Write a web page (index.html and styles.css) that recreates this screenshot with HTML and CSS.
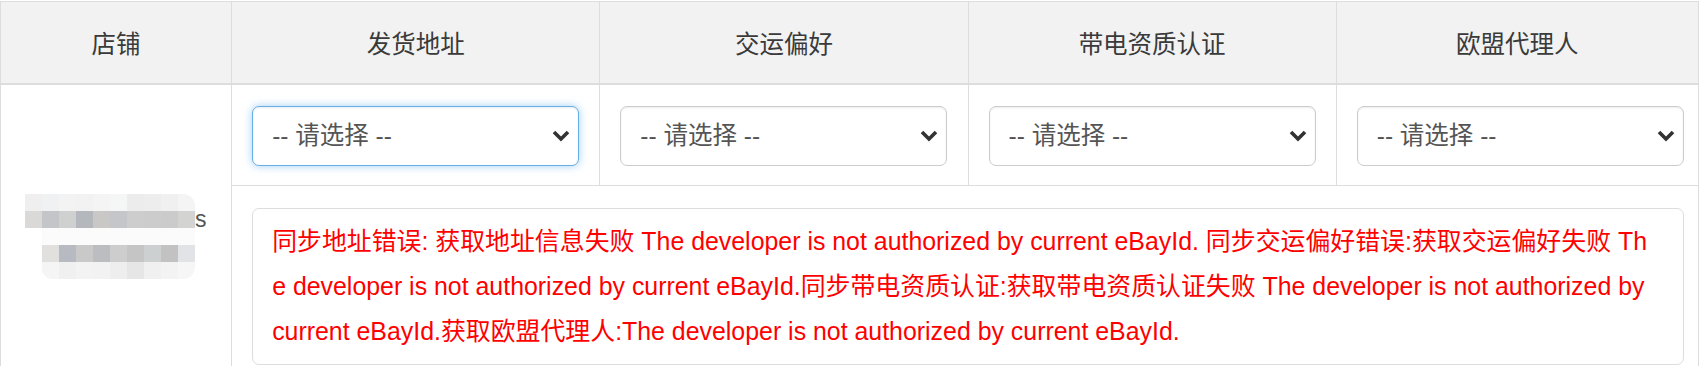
FILE: index.html
```html
<!DOCTYPE html>
<html lang="zh-CN">
<head>
<meta charset="UTF-8">
<meta name="viewport" content="width=device-width, initial-scale=1.0">
<title>店铺设置</title>
<link rel="stylesheet" href="styles.css">
</head>
<body>

<table class="shop-table">
  <colgroup>
    <col class="col-shop">
    <col class="col-opt">
    <col class="col-opt">
    <col class="col-opt">
    <col class="col-last">
  </colgroup>
  <thead>
    <tr>
      <th>店铺</th>
      <th>发货地址</th>
      <th>交运偏好</th>
      <th>带电资质认证</th>
      <th>欧盟代理人</th>
    </tr>
  </thead>
  <tbody>
    <tr class="select-row">
      <td rowspan="2" class="shop-cell">
        <div class="mosaic">
          <div class="mosaic-row">
            <i style="background:#efefef"></i><i style="background:#eff1f3"></i><i style="background:#f3f3f3"></i><i style="background:#f2f2f2"></i><i style="background:#f4f4f4"></i><i style="background:#f5f7f6"></i><i style="background:#ececec"></i><i style="background:#ededed"></i><i style="background:#f0f0f0"></i><i class="round-tr" style="background:#f4f4f4"></i>
          </div>
          <div class="mosaic-row">
            <i style="background:#dbd9d7"></i><i style="background:#c3c5c9"></i><i style="background:#cfd1d0"></i><i style="background:#b4b8bd"></i><i style="background:#c9c8c6"></i><i style="background:#c4c6c9"></i><i style="background:#cecdcd"></i><i style="background:#cdcccc"></i><i style="background:#cbcbcb"></i><i style="background:#d3d3d1"></i><span class="mosaic-tail">s</span>
          </div>
          <div class="mosaic-row mosaic-gap"></div>
          <div class="mosaic-row indent">
            <i style="background:#e1e0df"></i><i style="background:#b8bac2"></i><i style="background:#c9c9c9"></i><i style="background:#bcbdc1"></i><i style="background:#cdcdcd"></i><i style="background:#c5c5c5"></i><i style="background:#cdd0d0"></i><i style="background:#c2c2c2"></i><i style="background:#e1e3e7"></i>
          </div>
          <div class="mosaic-row indent">
            <i class="round-bl" style="background:#f5f5f5"></i><i style="background:#f0f0f0"></i><i style="background:#f3f3f3"></i><i style="background:#f2f2f2"></i><i style="background:#eeeeee"></i><i style="background:#e6e6e6"></i><i style="background:#f0f0f0"></i><i style="background:#f3f3f3"></i><i class="round-br" style="background:#f6f6f6"></i>
          </div>
        </div>
      </td>
      <td>
        <div class="select-wrap">
          <select class="form-select is-focus">
            <option>-- 请选择 --</option>
          </select>
          <svg class="chevron" width="18" height="12" viewBox="0 0 18 12"><polyline points="2,2 9,9 16,2" fill="none" stroke="#333" stroke-width="3.6"/></svg>
        </div>
      </td>
      <td>
        <div class="select-wrap">
          <select class="form-select">
            <option>-- 请选择 --</option>
          </select>
          <svg class="chevron" width="18" height="12" viewBox="0 0 18 12"><polyline points="2,2 9,9 16,2" fill="none" stroke="#333" stroke-width="3.6"/></svg>
        </div>
      </td>
      <td>
        <div class="select-wrap">
          <select class="form-select">
            <option>-- 请选择 --</option>
          </select>
          <svg class="chevron" width="18" height="12" viewBox="0 0 18 12"><polyline points="2,2 9,9 16,2" fill="none" stroke="#333" stroke-width="3.6"/></svg>
        </div>
      </td>
      <td>
        <div class="select-wrap">
          <select class="form-select">
            <option>-- 请选择 --</option>
          </select>
          <svg class="chevron" width="18" height="12" viewBox="0 0 18 12"><polyline points="2,2 9,9 16,2" fill="none" stroke="#333" stroke-width="3.6"/></svg>
        </div>
      </td>
    </tr>
    <tr class="error-row">
      <td colspan="4">
        <div class="sync-error">同步地址错误: 获取地址信息失败 The developer is not authorized by current eBayId. 同步交运偏好错误:获取交运偏好失败 The developer is not authorized by current eBayId.同步带电资质认证:获取带电资质认证失败 The developer is not authorized by current eBayId.获取欧盟代理人:The developer is not authorized by current eBayId.</div>
      </td>
    </tr>
  </tbody>
</table>

</body>
</html>
```

FILE: styles.css
```css
* {
  box-sizing: border-box;
}

body {
  margin: 0;
  background: #fff;
  font-family: "Liberation Sans", "Noto Sans CJK SC", sans-serif;
  color: #333;
}

.shop-table {
  border-collapse: collapse;
  table-layout: fixed;
  width: 1699px;
  margin-top: 1px;
  border: 1px solid #ddd;
}

.col-shop { width: 231px; }
.col-opt { width: 368px; }
.col-last { width: 362px; }

.shop-table th,
.shop-table td {
  border: 1px solid #ddd;
}

.shop-table th {
  background: #f2f2f2;
  height: 82px;
  padding: 0 10px;
  font-weight: normal;
  font-size: 24.5px;
  color: #3a3a3a;
  border-bottom: 2px solid #ddd;
}

.select-row td {
  padding: 21px 20px 19px;
}

.shop-cell {
  text-align: center;
  vertical-align: middle;
}

.select-wrap {
  position: relative;
  width: 327px;
}

.form-select {
  appearance: none;
  -webkit-appearance: none;
  display: block;
  width: 327px;
  height: 60px;
  padding: 0 40px 0 19px;
  border: 1px solid #ccc;
  border-radius: 7px;
  background: #fff;
  font-family: inherit;
  font-size: 24.5px;
  color: #555;
  box-shadow: inset 0 1px 2px rgba(0, 0, 0, 0.075);
}

.form-select.is-focus {
  border-color: #66afe9;
  box-shadow: inset 0 1px 2px rgba(0, 0, 0, 0.075), 0 0 9px rgba(102, 175, 233, 0.6);
}

.chevron {
  position: absolute;
  right: 9px;
  top: 24px;
  pointer-events: none;
}

.error-row td {
  padding: 22px 20px;
}

.sync-error {
  width: 1432px;
  padding: 10px 28px 10px 19px;
  border: 1px solid #ddd;
  border-radius: 7px;
  color: #f00;
  font-size: 24.9px;
  line-height: 45px;
  word-break: break-all;
}

.mosaic {
  display: inline-flex;
  flex-direction: column;
  margin-left: -12px;
}

.mosaic-row {
  display: flex;
  align-items: center;
  height: 17px;
}

.mosaic-row.indent {
  padding-left: 17px;
}

.mosaic-gap {
  background: #fbfbfb;
  margin-left: 17px;
  width: 153px;
}

.mosaic-row i {
  display: block;
  width: 17px;
  height: 17px;
}

.mosaic-row .round-tr { border-top-right-radius: 12px; }
.mosaic-row .round-bl { border-bottom-left-radius: 10px; }
.mosaic-row .round-br { border-bottom-right-radius: 12px; }

.mosaic-tail {
  width: 0;
  font-size: 23px;
  color: #555;
  line-height: 17px;
}
```
